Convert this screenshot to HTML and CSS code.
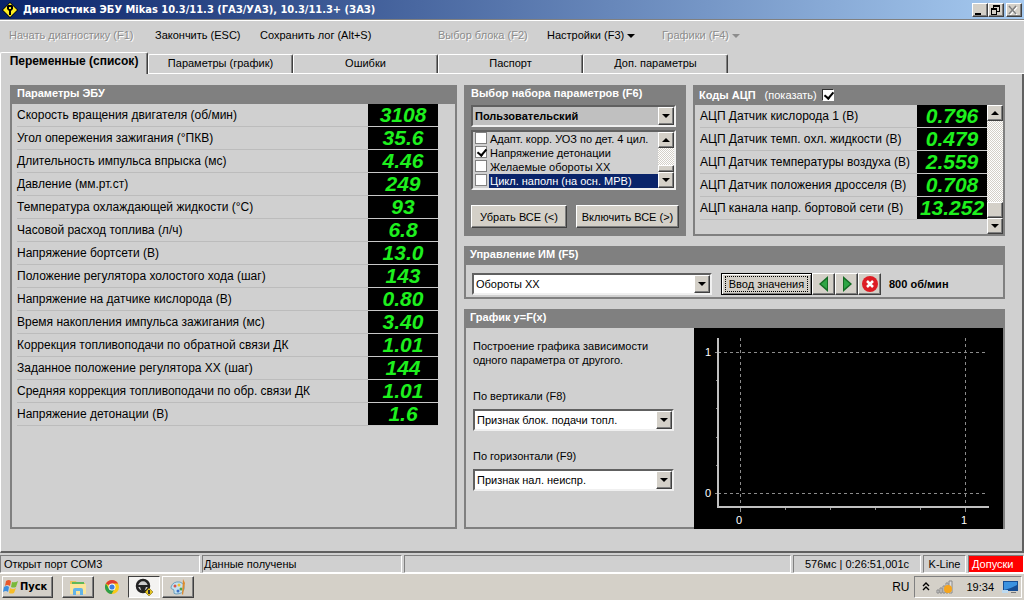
FILE: index.html
```html
<!DOCTYPE html>
<html lang="ru">
<head>
<meta charset="utf-8">
<title>Диагностика ЭБУ Mikas</title>
<link rel="stylesheet" href="styles.css">
</head>
<body>
<header class="titlebar">
  <svg class="app-icon" width="16" height="16" viewBox="0 0 16 16"><path d="M8 0l8 8-8 8-8-8z" fill="#000"/><path d="M8 1l7 7-7 7-7-7z" fill="#ffee20"/><path d="M6 3h4l1 1v3l-2 2v4H7V9L5 7V4z" fill="#000"/><path d="M7 5h2v2H7z" fill="#ffee20"/></svg>
  <h1 class="title">Диагностика ЭБУ Mikas 10.3/11.3 (ГАЗ/УАЗ), 10.3/11.3+ (ЗАЗ)</h1>
  <div class="window-buttons">
    <button class="win-btn" aria-label="Свернуть"><svg width="12" height="10"><path d="M2 8h6v2H2z"/></svg></button>
    <button class="win-btn" aria-label="Восстановить"><svg width="12" height="10"><path d="M4 0h7v7H8v3H2V3h2zM5 2v1h3v3h2V2zM3 5v4h4V5z" fill-rule="evenodd"/></svg></button>
    <button class="win-btn win-close" aria-label="Закрыть" disabled><svg width="12" height="10"><path d="M3 2l7 8M10 2l-7 8" stroke="#fff" stroke-width="1.6"/><path d="M2 1l7 8M9 1L2 9" stroke="#808080" stroke-width="1.6"/></svg></button>
  </div>
</header>
<nav class="menu">
  <button class="menu-item menu-start" disabled>Начать диагностику (F1)</button>
  <button class="menu-item menu-stop">Закончить (ESC)</button>
  <button class="menu-item menu-save">Сохранить лог (Alt+S)</button>
  <button class="menu-item menu-block" disabled>Выбор блока (F2)</button>
  <button class="menu-item menu-settings">Настройки (F3) <span class="caret"></span></button>
  <button class="menu-item" disabled>Графики (F4) <span class="caret"></span></button>
</nav>
<div class="tabs" role="tablist">
  <button class="tab tab-active" role="tab" aria-selected="true">Переменные (список)</button>
  <button class="tab" role="tab">Параметры (график)</button>
  <button class="tab" role="tab">Ошибки</button>
  <button class="tab" role="tab">Паспорт</button>
  <button class="tab" role="tab">Доп. параметры</button>
</div>
<main class="page">
  <section class="panel">
    <h2 class="panel-title">Параметры ЭБУ</h2>
    <table class="readings readings-ecu">
      <tr><th>Скорость вращения двигателя (об/мин)</th><td>3108</td></tr>
      <tr><th>Угол опережения зажигания (°ПКВ)</th><td>35.6</td></tr>
      <tr><th>Длительность импульса впрыска (мс)</th><td>4.46</td></tr>
      <tr><th>Давление (мм.рт.ст)</th><td>249</td></tr>
      <tr><th>Температура охлаждающей жидкости (°C)</th><td>93</td></tr>
      <tr><th>Часовой расход топлива (л/ч)</th><td>6.8</td></tr>
      <tr><th>Напряжение бортсети (В)</th><td>13.0</td></tr>
      <tr><th>Положение регулятора холостого хода (шаг)</th><td>143</td></tr>
      <tr><th>Напряжение на датчике кислорода (В)</th><td>0.80</td></tr>
      <tr><th>Время накопления импульса зажигания (мс)</th><td>3.40</td></tr>
      <tr><th>Коррекция топливоподачи по обратной связи ДК</th><td>1.01</td></tr>
      <tr><th>Заданное положение регулятора ХХ (шаг)</th><td>144</td></tr>
      <tr><th>Средняя коррекция топливоподачи по обр. связи ДК</th><td>1.01</td></tr>
      <tr><th>Напряжение детонации (В)</th><td>1.6</td></tr>
    </table>
  </section>
  <div class="side">
    <div class="top-row">
      <section class="panel panel-set">
        <h2 class="panel-title">Выбор набора параметров (F6)</h2>
        <div class="set-body">
          <div class="combo combo-set">
            <select aria-label="Набор параметров"><option>Пользовательский</option></select>
            <span class="btn-face drop"><span class="arrow-down"></span></span>
          </div>
          <div class="checklist">
            <div class="checks">
              <label class="check"><input type="checkbox"><span>Адапт. корр. УОЗ по дет. 4 цил.</span></label>
              <label class="check"><input type="checkbox" checked><span>Напряжение детонации</span></label>
              <label class="check"><input type="checkbox"><span>Желаемые обороты ХХ</span></label>
              <label class="check check-current"><input type="checkbox"><span>Цикл. наполн (на осн. МРВ)</span></label>
            </div>
            <div class="scrollbar">
              <span class="btn-face sb-btn"><span class="arrow-up"></span></span>
              <span class="sb-track"></span>
              <span class="btn-face sb-thumb-small"></span>
              <span class="btn-face sb-btn"><span class="arrow-down"></span></span>
            </div>
          </div>
          <div class="set-buttons">
            <button class="button button-clear">Убрать ВСЕ (&lt;)</button>
            <button class="button button-all">Включить ВСЕ (&gt;)</button>
          </div>
        </div>
      </section>
      <section class="panel panel-adc">
        <div class="panel-title adc-head">
          <h2 class="adc-title">Коды АЦП</h2>
          <label class="adc-show">(показать) <input type="checkbox" checked></label>
        </div>
        <div class="adc-body">
          <table class="readings readings-adc">
            <tr><th>АЦП Датчик кислорода 1 (В)</th><td>0.796</td></tr>
            <tr><th>АЦП Датчик темп. охл. жидкости (В)</th><td>0.479</td></tr>
            <tr><th>АЦП Датчик температуры воздуха (В)</th><td>2.559</td></tr>
            <tr><th>АЦП Датчик положения дросселя (В)</th><td>0.708</td></tr>
            <tr><th>АЦП канала напр. бортовой сети (В)</th><td>13.252</td></tr>
          </table>
          <div class="scrollbar">
            <span class="btn-face sb-btn"><span class="arrow-up"></span></span>
            <span class="sb-track"></span>
            <span class="btn-face sb-thumb"></span>
            <span class="btn-face sb-btn"><span class="arrow-down"></span></span>
          </div>
        </div>
      </section>
    </div>
    <section class="panel">
      <h2 class="panel-title panel-title-near">Управление ИМ (F5)</h2>
      <div class="im-body">
        <div class="combo combo-im">
          <select aria-label="Исполнительный механизм"><option>Обороты ХХ</option></select>
          <span class="btn-face drop"><span class="arrow-down"></span></span>
        </div>
        <div class="im-buttons">
          <button class="button button-default"><span class="focus">Ввод значения</span></button>
          <button class="button icon-btn" aria-label="Меньше"><svg width="16" height="16"><path d="M12 0v16L3 8z" fill="#146c24"/><path d="M11 3v10L5 8z" fill="#2fa545"/></svg></button>
          <button class="button icon-btn" aria-label="Больше"><svg width="16" height="16"><path d="M4 0v16l9-8z" fill="#146c24"/><path d="M5 3v10l6-5z" fill="#2fa545"/></svg></button>
          <button class="button icon-btn" aria-label="Отмена"><svg width="16" height="16"><circle cx="8" cy="8" r="8" fill="#dd1c24"/><path d="M5 5l6 6M11 5l-6 6" stroke="#fff" stroke-width="2.5"/></svg></button>
        </div>
        <strong class="rpm">800 об/мин</strong>
      </div>
    </section>
    <section class="panel panel-graph">
      <h2 class="panel-title panel-title-near">График y=F(x)</h2>
      <div class="graph-body">
        <div class="graph-form">
          <p class="graph-note">Построение графика зависимости<br>одного параметра от другого.</p>
          <label class="graph-label" for="axis-y">По вертикали (F8)</label>
          <div class="combo combo-y">
            <select id="axis-y"><option>Признак блок. подачи топл.</option></select>
            <span class="btn-face drop"><span class="arrow-down"></span></span>
          </div>
          <label class="graph-label" for="axis-x">По горизонтали (F9)</label>
          <div class="combo">
            <select id="axis-x"><option>Признак нал. неиспр.</option></select>
            <span class="btn-face drop"><span class="arrow-down"></span></span>
          </div>
        </div>
        <svg class="chart" viewBox="0 0 309 201" preserveAspectRatio="xMidYMid meet">
          <g fill="none" stroke="#8c8c8c" shape-rendering="crispEdges">
            <path stroke-dasharray="3 3" d="M46.500 10v170M271.500 10v170M24 24.500h268M24 165.500h268"/>
            <path d="M21 24.500h5M21 165.500h5M22 52.500h2M22 80.500h2M22 109.500h2M22 137.500h2M46.500 180v4M271.500 180v4M91.500 180v2M136.500 180v2M181.500 180v2M226.500 180v2"/>
          </g>
          <path d="M24 10v169h271" fill="none" stroke="#c0c0c0" stroke-width="2"/>
          <g class="chart-text"><text x="11" y="28">1</text><text x="11" y="169">0</text><text x="42" y="196">0</text><text x="267" y="196">1</text></g>
        </svg>
      </div>
    </section>
  </div>
</main>
<footer class="status">
  <span class="cell cell-port">Открыт порт COM3</span>
  <span class="cell cell-data">Данные получены</span>
  <span class="cell cell-empty"></span>
  <span class="cell cell-time">576мс | 0:26:51,001с</span>
  <span class="cell cell-line">K-Line</span>
  <span class="cell cell-alarm">Допуски</span>
</footer>
<div class="taskbar">
  <button class="button start"><svg width="16" height="16" viewBox="0 0 16 16"><path d="M3 2q3-2 5 0L7 7Q4 5 2 7z" fill="#e8572a"/><path d="M9 3q3 1 6-1l-2 6q-3 1-5 0z" fill="#79b93c"/><path d="M1 8q3-2 5 0l-1 5q-2-2-5 0z" fill="#3b8ee0"/><path d="M7 9q3 2 6 0l-2 5q-3 1-5 0z" fill="#f7bd28"/></svg>Пуск</button>
  <button class="button task" aria-label="Проводник"><svg width="18" height="18" viewBox="0 0 18 18"><path d="M1 3h6l1 2h8v11H1z" fill="#e8c35c"/><path d="M3 4h12v4H3z" fill="#5fb85a"/><path d="M1 6h16v10H1z" fill="#fbe59a"/><path d="M4 17v-5q0-2 2-2h6q2 0 2 2v5h-3v-4H7v4z" fill="#63b4e8"/></svg></button>
  <button class="task-flat" aria-label="Chrome"><svg width="16" height="16" viewBox="0 0 16 16"><circle cx="8" cy="8" r="7" fill="#f9c916"/><path d="M8 8L1.900 4.500A7 7 0 0 1 14.100 4.500H8z" fill="#e03c31"/><path d="M8 8l-3 1.700L1.900 4.500A7 7 0 0 0 7.500 15l3-5z" fill="#2e9e49"/><circle cx="8" cy="8" r="3.500" fill="#fff"/><circle cx="8" cy="8" r="2.600" fill="#3f7fe0"/></svg></button>
  <button class="button task task-pressed" aria-label="Диагностика"><svg width="18" height="18" viewBox="0 0 18 18"><circle cx="8" cy="8" r="6" fill="#ccc" stroke="#222" stroke-width="2.500"/><path d="M2 7h12v2h-3l-2 5H7L5 9H2z" fill="#222"/><path d="M14 10l4 4-4 4-4-4z" fill="#e5c51f" stroke="#665500" stroke-width=".5"/><path d="M13 12h2v4h-2z" fill="#333"/></svg></button>
  <button class="button task" aria-label="Paint"><svg width="18" height="18" viewBox="0 0 18 18"><path d="M2 9q2-6 9-5 5 2 4 7-1 5-8 5-3 0-2-3 0-2-2-2-1 0-1-2z" fill="#c4e2f0" stroke="#6ea0bd"/><circle cx="6" cy="8" r="1.500" fill="#d9534a"/><circle cx="10" cy="7" r="1.500" fill="#f1c232"/><circle cx="12" cy="11" r="1.500" fill="#4da64d"/><circle cx="9" cy="13" r="1.500" fill="#3d6fc4"/><path d="M14 1l2 4-2 12-1-1z" fill="#dd8a2c"/></svg></button>
  <span class="lang">RU</span>
  <div class="tray">
    <svg width="8" height="10" viewBox="0 0 8 10"><path d="M1 4l3-3 3 3M1 8l3-3 3 3" fill="none" stroke="#000" stroke-width="1.400"/></svg>
    <svg class="signal" width="17" height="14" viewBox="0 0 17 14"><path d="M1 10h2v3H1zM4 8h2v5H4zM7 6h2v7H7zM10 3h2v10h-2zM13 1h3v12h-3z" fill="#ddd" stroke="#888"/><circle cx="12" cy="9" r="4" fill="#f6a51d"/></svg>
    <time class="clock">19:34</time>
    <svg width="16" height="14" viewBox="0 0 16 14"><path d="M1 1h15v10H1z" fill="#164d94"/><path d="M2 2h13v3Q8 9 2 10z" fill="#3b92e0"/><path d="M0 10h6v3H0z" fill="#bcd9f0"/><path d="M9 12h5v1H9z" fill="#777"/></svg>
  </div>
</div>
</body>
</html>
```
FILE: styles.css
```css
* { box-sizing: border-box; }
body {
  margin: 0;
  min-height: 100vh;
  display: flex;
  flex-direction: column;
  background: #d0d0d0;
  color: #000;
  font: 11px/14px "Liberation Sans", Arial, sans-serif;
}
h1, h2, p { margin: 0; font-size: inherit; }
button, select, input { font: inherit; color: inherit; margin: 0; padding: 0; border-radius: 0; }
svg { display: block; flex: none; }

.titlebar {
  display: flex;
  align-items: center;
  gap: 5px;
  height: 19px;
  padding: 0 2px;
  background: linear-gradient(90deg, #0a246a, #a6caf0);
  color: #fff;
}
.title { flex: 1; font: bold 11px/14px "DejaVu Sans Condensed", "DejaVu Sans", sans-serif; }
.window-buttons { display: flex; }
.btn-face, .win-btn, .button {
  background: #d4d0c8;
  border: 1px solid;
  border-color: #fff #404040 #404040 #fff;
  box-shadow: inset -1px -1px #808080;
}
.win-btn { width: 16px; height: 14px; }
.win-close { margin-left: 2px; }

.menu {
  display: flex;
  height: 33px;
  padding: 0 9px 3px;
  border-top: 1px solid #808080;
  box-shadow: inset 0 1px #fff;
}
.menu-item { border: 0; background: none; text-align: left; white-space: nowrap; }
.menu-item:disabled { color: #8c8c8c; text-shadow: 1px 1px #fff; }
.menu-start { width: 146px; }
.menu-stop { width: 105px; }
.menu-save { width: 178px; }
.menu-block { width: 109px; }
.menu-settings { width: 115px; }
.caret {
  display: inline-block;
  vertical-align: middle;
  border: 4px solid transparent;
  border-top-color: currentColor;
  border-bottom: 0;
}

.tabs { display: flex; align-items: flex-end; height: 22px; border-bottom: 1px solid #fff; }
.tab {
  width: 145px;
  height: 19px;
  padding-bottom: 2px;
  border: 1px solid;
  border-color: #fff #404040 transparent #fff;
  border-bottom: 0;
  border-radius: 2px 2px 0 0;
  background: none;
  box-shadow: inset -1px 0 #808080;
}
.tab-active {
  width: 148px;
  height: 22px;
  padding-bottom: 6px;
  margin-bottom: -1px;
  background: #d0d0d0;
  font-size: 12px;
  font-weight: bold;
}

.page {
  flex: 1;
  display: grid;
  grid-template-columns: 447fr 541fr;
  gap: 7px;
  padding: 11px 17px 22px 9px;
  border: solid;
  border-width: 0 2px 2px 1px;
  border-color: #fff #606060 #606060 #fff;
}
.panel { border: 2px solid #808080; border-top: 0; }
.panel-title {
  height: 19px;
  padding: 0 5px;
  background: #808080;
  color: #fff;
  font-weight: bold;
  line-height: 17px;
}
.panel-title-near { padding: 0 4px; }
.side { display: flex; flex-direction: column; gap: 10px; min-width: 0; }

.readings { border-collapse: separate; border-spacing: 0; font-size: 12px; }
.readings th {
  height: 23px;
  padding: 0;
  border-bottom: 1px solid #bcbcbc;
  font-weight: normal;
  text-align: left;
  white-space: nowrap;
}
.readings td {
  width: 70px;
  padding: 0;
  border-bottom: 1px solid #c8c8c8;
  background: #000;
  color: #1ef01e;
  font: italic bold 21px/22px "Liberation Sans Narrow", "Liberation Sans", sans-serif;
  text-align: center;
}
.readings-ecu { width: calc(100% - 22px); margin-left: 5px; }
.readings-adc { flex: 1; margin-left: 5px; }

.top-row { display: grid; grid-template-columns: 222fr 312fr; gap: 7px; height: 151px; }
.panel-set { background: #808080; }
.set-body { padding: 1px 5px 0 5px; }
.combo {
  display: flex;
  height: 22px;
  background: #fff;
  border: 2px solid;
  border-color: #606060 #f0f0f0 #f0f0f0 #606060;
}
.combo select { flex: 1; min-width: 0; border: 0; background: none; appearance: none; padding-left: 2px; }
.drop, .sb-btn { display: flex; align-items: center; justify-content: center; width: 16px; }
.arrow-down, .arrow-up { border: 4px solid transparent; }
.arrow-down { border-top-color: #000; border-bottom: 0; }
.arrow-up { border-bottom-color: #000; border-top: 0; }
.combo-set, .checklist { margin-right: 3px; }
.combo-set { background: #c0c0c0; font-weight: bold; }
.checklist {
  display: flex;
  height: 60px;
  margin-top: 3px;
  background: #d0d0d0;
  border: 2px solid;
  border-color: #606060 #f0f0f0 #f0f0f0 #606060;
}
.checks { flex: 1; min-width: 0; }
.check { display: flex; height: 14px; gap: 2px; padding-left: 2px; white-space: nowrap; }
.check span { flex: 1; padding-left: 1px; }
.check-current span { background: #0a246a; color: #fff; }
input[type="checkbox"] {
  appearance: none;
  flex: none;
  width: 12px;
  height: 12px;
  border: 1px solid #808080;
  background: #fff;
}
input[type="checkbox"]:checked::before {
  content: "";
  display: block;
  width: 4px;
  height: 7px;
  margin-left: 3px;
  border: solid #000;
  border-width: 0 2px 2px 0;
  transform: rotate(40deg);
}
.scrollbar { display: flex; flex-direction: column; width: 16px; }
.sb-btn { height: 16px; }
.sb-track { flex: 1; background: repeating-conic-gradient(#fff 0 25%, #d4d0c8 0 50%) 0 0 / 2px 2px; }
.sb-thumb { height: 16px; }
.sb-thumb-small { height: 7px; }
.set-buttons { display: flex; justify-content: space-between; margin-top: 15px; }
.button { height: 22px; white-space: nowrap; }
.set-buttons .button { height: 23px; }
.button-clear { width: 96px; }
.button-all { width: 103px; }

.panel-adc { display: flex; flex-direction: column; }
.adc-head { display: flex; align-items: center; gap: 9px; height: 20px; padding-left: 4px; }
.adc-show { display: flex; align-items: center; gap: 5px; font-weight: normal; }
.adc-show input[type="checkbox"] { border-color: #303030 #fff #fff #303030; }
.adc-body { flex: 1; display: flex; align-items: flex-start; }
.adc-body .scrollbar { height: 100%; }

.im-body { display: flex; align-items: center; padding: 8px 6px 2px; }
.combo-im { width: 240px; }
.im-buttons { display: flex; margin: 0 8px 0 9px; }
.button-default { width: 91px; border-color: #000; box-shadow: inset 1px 1px #fff, inset -1px -1px #808080; }
.focus { display: block; margin: 0 3px; border: 1px dotted #000; }
.icon-btn { display: flex; align-items: center; justify-content: center; width: 23px; }

.panel-graph { flex: 1; display: flex; flex-direction: column; border-bottom: 0; }
.graph-body { flex: 1; display: flex; }
.graph-form { width: 228px; padding: 11px 20px 0 7px; border-bottom: 2px solid #808080; }
.graph-note { margin-bottom: 22px; }
.graph-label { display: block; margin-bottom: 6px; }
.combo-y { margin-bottom: 18px; }
.chart { flex: 1; min-width: 0; background: #000; }
.chart-text { fill: #fff; font-size: 11px; }

.status { display: flex; gap: 2px; height: 18px; margin-top: 2px; white-space: nowrap; }
.cell {
  padding: 0 3px;
  border: 1px solid;
  border-color: #808080 #fff #fff #808080;
  line-height: 16px;
}
.cell-port, .cell-data { width: 200px; }
.cell-data { padding: 0 1px; }
.cell-empty { flex: 1; }
.cell-time { width: 128px; text-align: center; }
.cell-line { width: 43px; text-align: center; }
.cell-alarm { width: 56px; background: #f00; color: #fff; }

.taskbar {
  display: flex;
  align-items: center;
  height: 27px;
  padding: 0 2px;
  background: #d4d0c8;
  border-top: 1px solid #fff;
}
.start {
  display: flex;
  align-items: center;
  gap: 1px;
  width: 51px;
  margin-right: 9px;
  font: bold 11px/14px "DejaVu Sans Condensed", "DejaVu Sans", sans-serif;
}
.task { display: flex; align-items: center; justify-content: center; width: 32px; margin-right: 2px; }
.task-flat { display: flex; justify-content: center; width: 32px; border: 0; background: none; }
.task-pressed { background: #f4f3f1; border-color: #404040 #fff #fff #404040; box-shadow: none; }
.lang { margin-left: auto; margin-right: 5px; font-size: 12px; }
.tray {
  display: flex;
  align-items: center;
  height: 22px;
  padding: 0 3px 0 7px;
  border: 1px solid;
  border-color: #808080 #fff #fff #808080;
}
.signal { margin-left: 6px; }
.clock { margin: 0 8px 0 13px; }
```
